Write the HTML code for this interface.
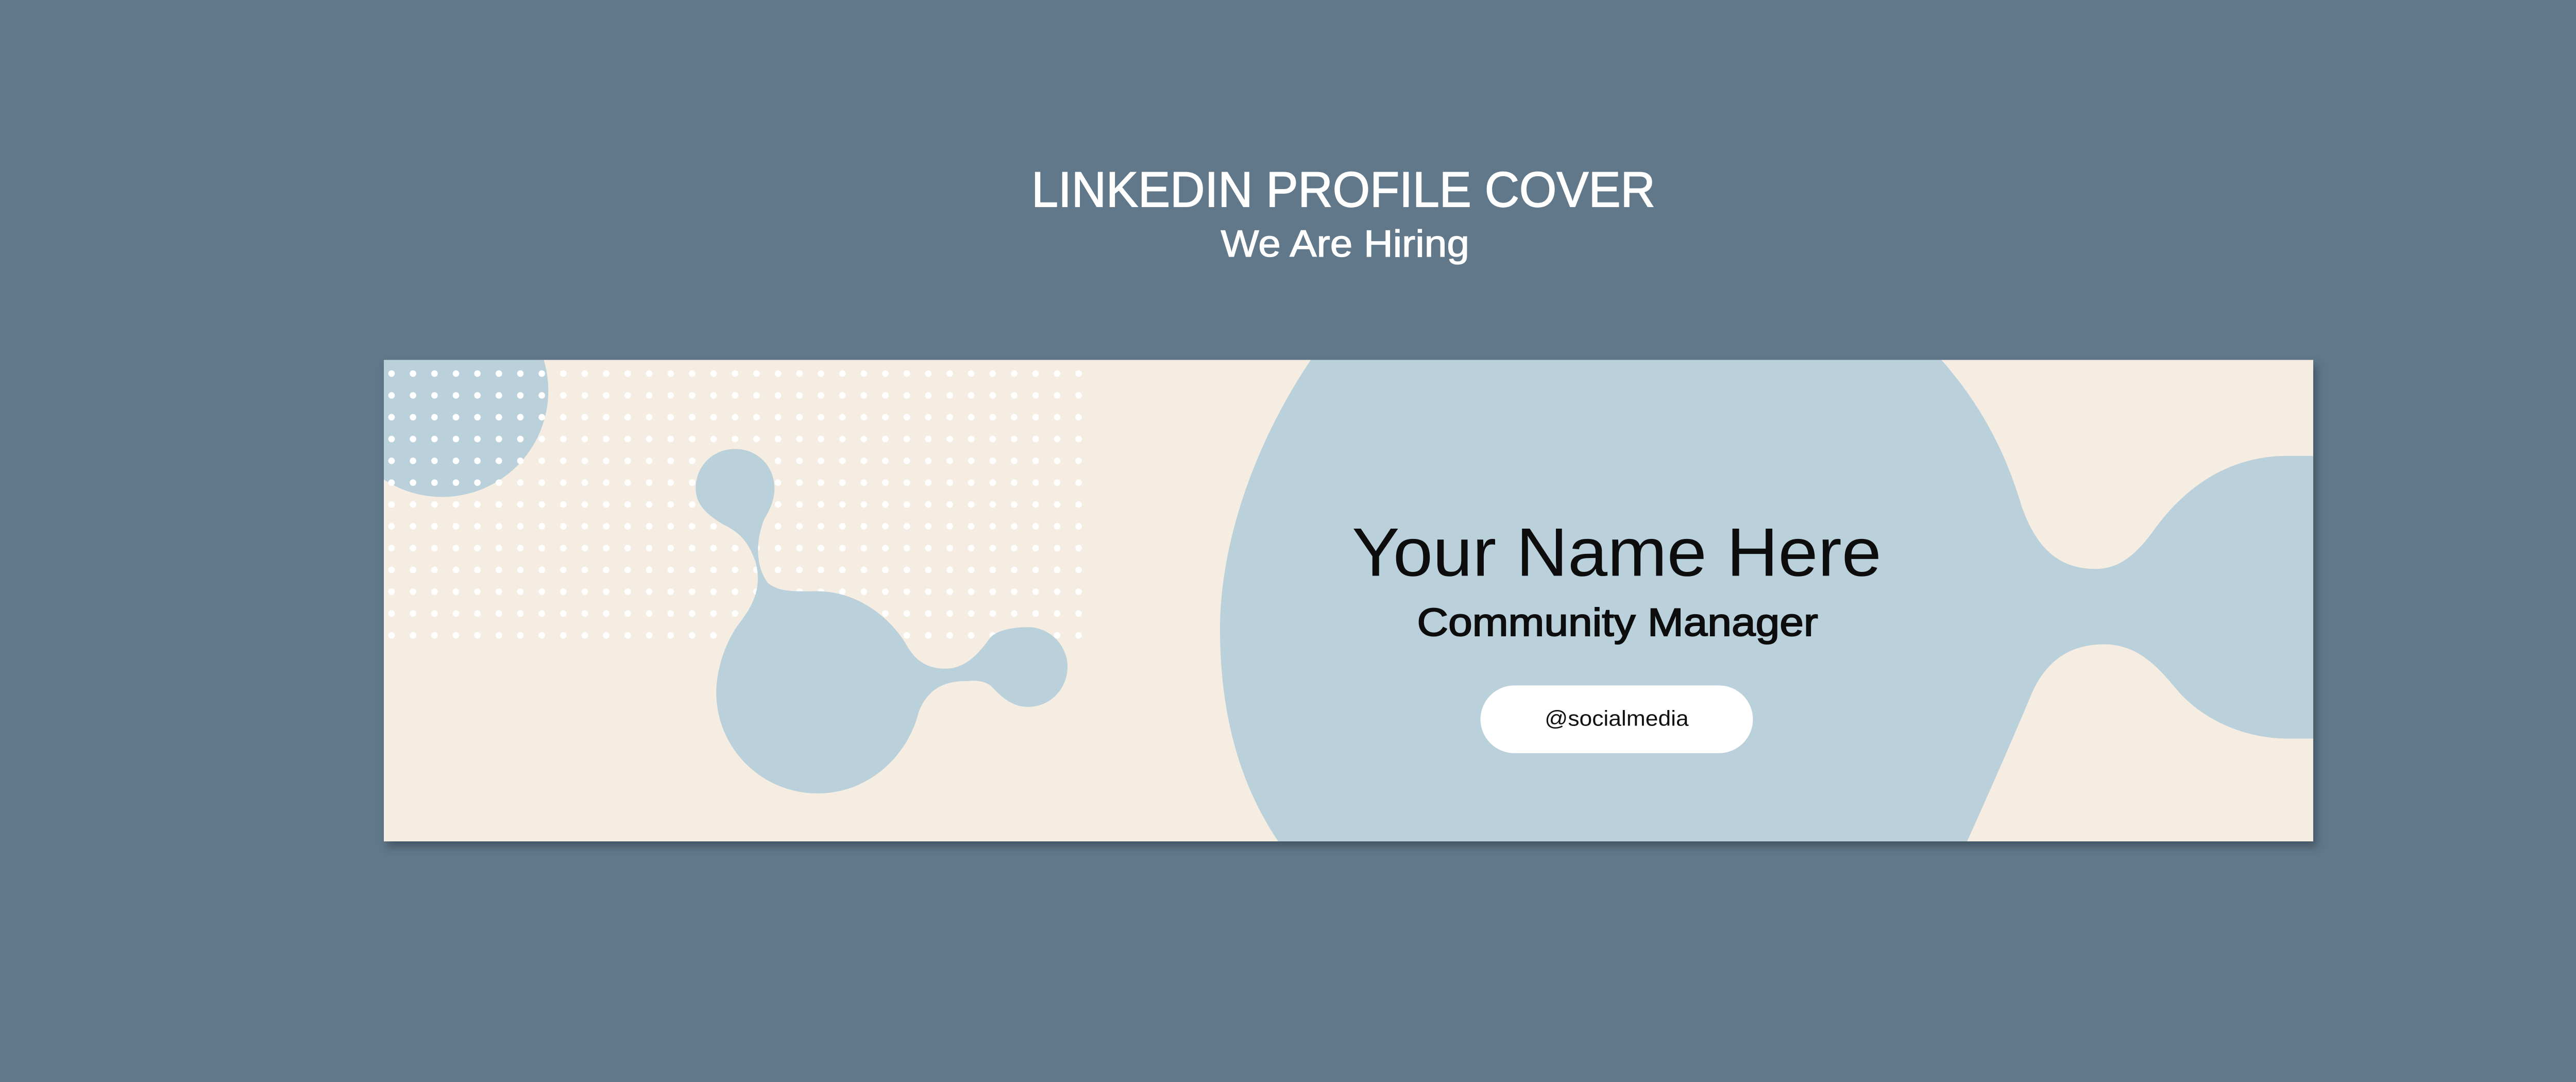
<!DOCTYPE html>
<html><head><meta charset="utf-8"><style>
html,body{margin:0;padding:0;background:#61788a;width:5215px;height:2100px;overflow:hidden;}
svg{display:block;}
</style></head><body>
<svg width="5215" height="2100" viewBox="0 0 1568 631.4" preserveAspectRatio="none" xmlns="http://www.w3.org/2000/svg">
<defs>
<filter id="sh" x="-5%" y="-5%" width="110%" height="120%"><feGaussianBlur stdDeviation="2.5"/></filter>
<clipPath id="card"><rect x="224" y="210" width="1126" height="281"/></clipPath>
<pattern id="dp" patternUnits="userSpaceOnUse" x="222.235" y="211.635" width="12.53" height="12.73">
<circle cx="6.265" cy="6.365" r="1.9" fill="#fff"/>
</pattern>
</defs>
<rect width="1568" height="631.4" fill="#61788a"/>
<text x="784" y="120.6" text-anchor="middle" font-family="Liberation Sans, sans-serif" font-size="29" fill="#fff" stroke="#fff" stroke-width="0.5" textLength="364" lengthAdjust="spacingAndGlyphs">LINKEDIN PROFILE COVER</text>
<text x="785" y="149.7" text-anchor="middle" font-family="Liberation Sans, sans-serif" font-size="22" fill="#fff" stroke="#fff" stroke-width="0.4" textLength="145" lengthAdjust="spacingAndGlyphs">We Are Hiring</text>
<rect x="226" y="213" width="1126" height="281" fill="#2e3d48" opacity="0.6" filter="url(#sh)"/>
<g clip-path="url(#card)">
<rect x="224" y="210" width="1126" height="281" fill="#f5ede2"/>
<circle cx="258" cy="228" r="62" fill="#bad0db"/>
<rect x="222.235" y="211.635" width="413.49" height="165.49" fill="url(#dp)"/>
<path fill="#bad0db" d="M765,210 C730,262 712,320 712,367 C712,420 725,460 746,491 L1148,491 C1162,460 1176,428 1186,404 C1196,382 1212,376 1228,376 C1248,376 1260,390 1270,402 C1285,420 1310,431 1335,431 L1350,431 L1350,266 L1335,266 C1300,266 1275,285 1258,308 C1248,322 1238,332 1223,332 C1200,332 1188,318 1180,296 C1170,262 1155,235 1133,210 Z"/>
<path fill="#bad0db" d="M429,262 C442,262 452,272 452,285 C452,292 449,298 446,303 C440,318 442,332 448,340 C455,346 465,345 477,345 C500,345 520,360 530,378 C536,388 545,391 555,390 C566,388 572,380 578,372 C582,368 590,366 600,366 C613,366 623,377 623,389 C623,402 613,412.5 600,412.5 C590,412.5 584,406 578,400 C572,396 566,397.5 563,397.5 C548,397.5 540,405 536,416 C530,440 508,463 477,463 C445,463 418,437 418,404 C418,390 424,373 432,363 C442,350 444,340 441,328 C436,314 430,310 422,306 C412,300 406,294 406,285 C406,272 416,262 429,262 Z"/>
<rect x="864" y="400" width="159" height="39.5" rx="19.75" fill="#fff"/>
<text x="943.5" y="336" text-anchor="middle" font-family="Liberation Sans, sans-serif" font-size="40" fill="#0d0d0d" textLength="309" lengthAdjust="spacingAndGlyphs">Your Name Here</text>
<text x="944" y="371" text-anchor="middle" font-family="Liberation Sans, sans-serif" font-size="23" fill="#0d0d0d" stroke="#0d0d0d" stroke-width="0.6" textLength="234" lengthAdjust="spacingAndGlyphs">Community Manager</text>
<text x="943.5" y="423.5" text-anchor="middle" font-family="Liberation Sans, sans-serif" font-size="12.5" fill="#111" textLength="84" lengthAdjust="spacingAndGlyphs">@socialmedia</text>
</g>
</svg>
</body></html>
